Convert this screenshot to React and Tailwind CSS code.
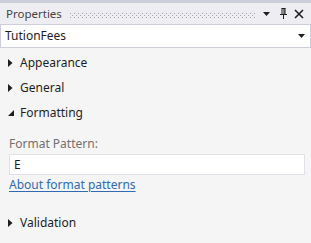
import React from "react";

function RightTri() {
  return (
    <svg width="5" height="8" viewBox="0 0 5 8" className="shrink-0">
      <path d="M0 0 L4.5 4 L0 8 Z" fill="#1e1e1e" />
    </svg>
  );
}

function DownRightTri() {
  return (
    <svg width="6" height="6" viewBox="0 0 6 6" className="shrink-0">
      <path d="M6 0 L6 6 L0 6 Z" fill="#1e1e1e" />
    </svg>
  );
}

function Row({ expanded, label }) {
  return (
    <div className="h-[25px] flex items-center pl-[8px]">
      <div className="w-[12px] flex items-center">
        {expanded ? <DownRightTri /> : <RightTri />}
      </div>
      <span>{label}</span>
    </div>
  );
}

function Grip() {
  return (
    <svg className="flex-1 h-[5px] ml-[8px] mr-[6px] mt-[3px]" height="5">
      <defs>
        <pattern id="grip" width="4" height="4" patternUnits="userSpaceOnUse">
          <rect x="0" y="0" width="1" height="1" fill="#a4a4ac" />
          <rect x="2" y="2" width="1" height="1" fill="#a4a4ac" />
        </pattern>
      </defs>
      <rect width="100%" height="5" fill="url(#grip)" />
    </svg>
  );
}

export default function App() {
  return (
    <div
      className="w-[311px] h-[243px] bg-[#f5f5f5] overflow-hidden text-[12px] text-[#1e1e1e] leading-[16px]"
      style={{ fontFamily: '"Noto Sans", "Open Sans", sans-serif' }}
    >
      <div className="h-[3px] bg-[#cccedb]" />
      <div className="h-[21px] bg-[#eeeef2] flex items-center pl-[6px] pr-[7px]">
        <span className="text-[#444444] text-[11.5px]">Properties</span>
        <Grip />
        <svg width="7" height="4" viewBox="0 0 7 4" className="ml-[2px]">
          <path d="M0 0 H7 L3.5 4 Z" fill="#1e1e1e" />
        </svg>
        <svg width="7" height="11" viewBox="0 0 7 11" className="ml-[10px]">
          <path d="M1.5 0.5 H5.5 M2 0.5 V6.5 M5 0.5 V6.5 M0 6.5 H7 M3.5 6.5 V11 M4 1 V6" stroke="#1e1e1e" strokeWidth="1" fill="none" />
        </svg>
        <svg width="10" height="10" viewBox="0 0 10 10" className="ml-[7px]">
          <path d="M1 1 L9 9 M9 1 L1 9" stroke="#1e1e1e" strokeWidth="1.6" fill="none" />
        </svg>
      </div>
      <div className="h-[24px] bg-white border border-[#cccedb] flex items-center pl-[4px] pr-[5px]">
        <span className="flex-1">TutionFees</span>
        <svg width="7" height="4" viewBox="0 0 7 4">
          <path d="M0 0 H7 L3.5 4 Z" fill="#1e1e1e" />
        </svg>
      </div>
      <div className="pt-[2px]">
        <Row label="Appearance" />
        <Row label="General" />
        <Row expanded label="Formatting" />
        <div className="pl-[9px] pr-[6px]">
          <div className="mt-[11px] text-[#717171]">Format Pattern:</div>
          <div className="mt-[2px] h-[21px] bg-white border border-[#e0e0e6] flex items-center pl-[4px]">
            E
          </div>
          <div className="mt-[2px]">
            <span className="text-[#2f6ab3] underline underline-offset-[2px] decoration-[#2f6ab3]">
              About format patterns
            </span>
          </div>
        </div>
        <div className="mt-[17px]">
          <Row label="Validation" />
        </div>
      </div>
    </div>
  );
}
